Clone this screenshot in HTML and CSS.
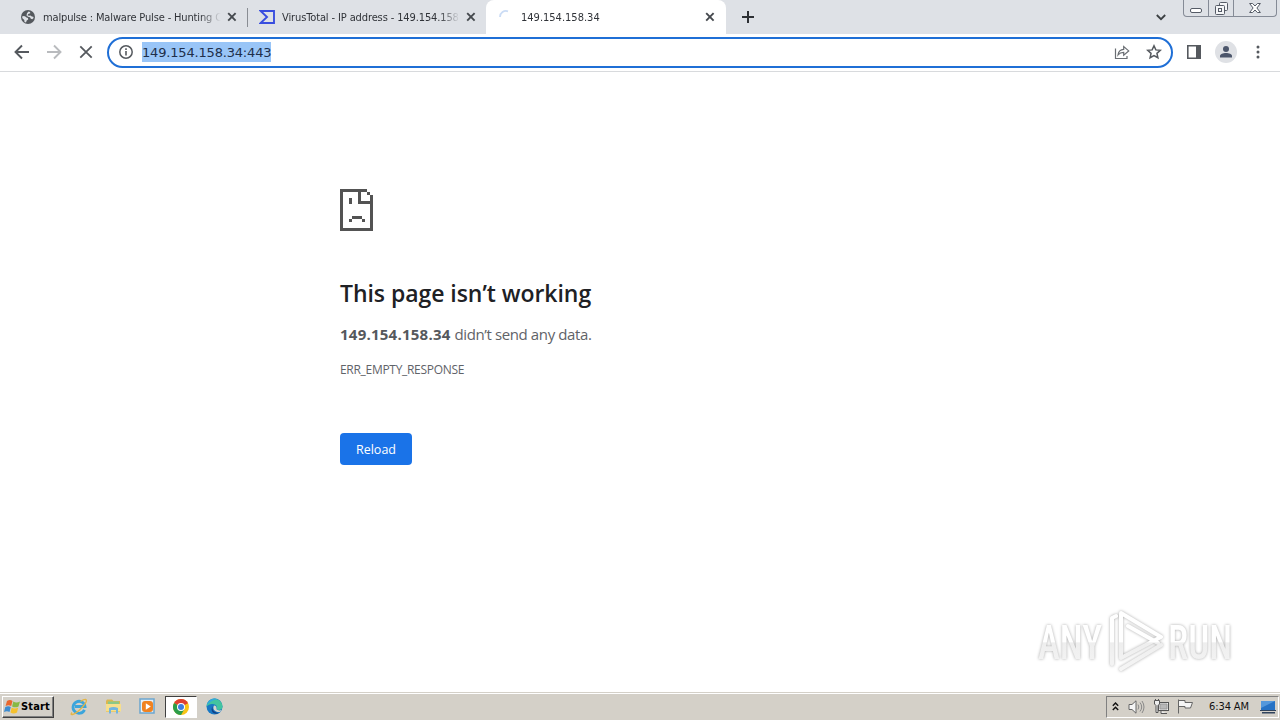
FILE: index.html
```html
<!DOCTYPE html>
<html lang="en">
<head>
	<meta charset="utf-8">
	<title>149.154.158.34</title>
	<link rel="stylesheet" href="styles.css">
</head>
<body>
<div class="screen">
	<!-- tab strip -->
	<div class="tabs">
		<div class="tab first">
			<svg class="favicon" width="14" height="14" viewBox="0 0 14 14"><circle cx="7" cy="7" r="7" fill="#54585d"/><path d="M1.500 6l2.500.3 1.500 1.200 1.500.5.2 1.500-1.500 1-.7 2-1.500-.6-.2-2L1.200 8zM7.500 1.500l1.500.5.3 1.200-2 .8-.8 1.300 1.500.5 1.500-.3 1.300 1 1.500.2.300 1.300-1.300 1.200-1.500-.5-.8-1.500-2-.4-1.500-1.300.5-2.200z" fill="#dee1e6"/></svg>
			<span class="title">malpulse : Malware Pulse - Hunting C</span>
			<svg class="close" width="10" height="10" viewBox="0 0 10 10"><path d="M1.2 1.2l7.4 7.4M8.6 1.2L1.2 8.6"/></svg>
		</div>
		<div class="tab second">
			<svg class="favicon" width="16" height="14" viewBox="0 0 16 14"><path d="M1.600 1h13.400v12H1.600L8 7z" fill="none" stroke="#394edf" stroke-width="1.900"/></svg>
			<span class="title">VirusTotal - IP address - 149.154.158</span>
			<svg class="close" width="10" height="10" viewBox="0 0 10 10"><path d="M1.2 1.2l7.4 7.4M8.6 1.2L1.2 8.6"/></svg>
		</div>
		<div class="tab active">
			<svg class="favicon" width="14" height="14" viewBox="0 0 14 14"><path d="M1 7a6 6 0 0 1 8-5.700" fill="none" stroke="#cbdcf5" stroke-width="1.800"/></svg>
			<span class="title">149.154.158.34</span>
			<svg class="close" width="10" height="10" viewBox="0 0 10 10"><path d="M1.2 1.2l7.4 7.4M8.6 1.2L1.2 8.6"/></svg>
		</div>
		<svg class="plus" width="12" height="12" viewBox="0 0 12 12"><path d="M6 0v12M0 6h12" stroke="#2d3034" stroke-width="2"/></svg>
		<svg class="chevron" width="10" height="7" viewBox="0 0 10 7"><path d="M.8 1L5 5.200 9.200 1" fill="none" stroke="#3c4043" stroke-width="1.800"/></svg>
		<div class="winbuttons">
			<span class="winbtn"><svg width="12" height="5" viewBox="0 0 12 5"><rect x=".5" y=".5" width="11" height="4" rx="1.500" fill="#fff" stroke="#555b66"/></svg></span>
			<span class="winbtn"><svg width="13" height="13" viewBox="0 0 13 13" fill="#f4f5f7" stroke="#555b66"><rect x="4.500" y=".5" width="8" height="8" rx="1"/><rect x=".5" y="3.500" width="9" height="9" rx="1"/><rect x="3.500" y="6.500" width="3" height="3"/></svg></span>
			<span class="winbtn wide"><svg width="12" height="10" viewBox="0 0 12 10"><path d="M.6.5h3L6 3 8.400.5h3L7.900 5l3.500 4.500h-3L6 7 3.600 9.500h-3L4.100 5z" fill="#fff" stroke="#555b66"/></svg></span>
		</div>
	</div>

	<!-- toolbar -->
	<div class="toolbar">
		<div class="nav">
			<svg width="16" height="16" viewBox="0 0 16 16"><path d="M15 8H2M8 1.500L1.500 8 8 14.500" fill="none" stroke="#55595e" stroke-width="1.900"/></svg>
			<svg width="16" height="16" viewBox="0 0 16 16"><path d="M1 8h13M8 1.500L14.500 8 8 14.500" fill="none" stroke="#b9bbbe" stroke-width="1.900"/></svg>
			<svg width="16" height="16" viewBox="0 0 16 16"><path d="M2.300 2.300l11.400 11.400M13.700 2.300L2.300 13.700" fill="none" stroke="#55595e" stroke-width="1.800"/></svg>
		</div>
		<div class="omnibox">
			<svg class="info" width="14" height="14" viewBox="0 0 14 14"><circle cx="7" cy="7" r="6.200" fill="none" stroke="#55595e" stroke-width="1.500"/><path d="M7 6v4.500M7 3.300v1.600" stroke="#55595e" stroke-width="1.600"/></svg>
			<span class="url">149.154.158.34:443</span>
			<svg class="share" width="16" height="16" viewBox="0 0 16 16" fill="none" stroke="#6a6e73" stroke-width="1.200"><path d="M1.500 4.500v10h11.500V12"/><path d="M4 11c.5-4 2.600-5.600 5.700-5.700V2.600l5 4.300-5 4.200V8.400C7.300 8.400 5.500 9.100 4 11z"/></svg>
			<svg class="star" width="16" height="16" viewBox="0 0 16 16"><path d="M8 1.800l1.850 4.100 4.450.45-3.350 3 .95 4.400L8 11.500l-3.900 2.250.95-4.400-3.350-3 4.450-.45z" fill="none" stroke="#55595e" stroke-width="1.500"/></svg>
		</div>
		<svg class="panel" width="14" height="14" viewBox="0 0 14 14"><path d="M.8.8h12.400v12.400H.8z" fill="#fff" stroke="#55595e" stroke-width="1.600"/><path d="M9 1h4v12H9z" fill="#55595e"/></svg>
		<svg class="avatar" width="22" height="22" viewBox="0 0 22 22"><circle cx="11" cy="11" r="11" fill="#dfe1e5"/><circle cx="11" cy="8" r="3" fill="#4c566b"/><path d="M5 16.500V15c0-4 12-4 12 0v1.500z" fill="#4c566b"/></svg>
		<svg class="dots" width="4" height="14" viewBox="0 0 4 14" fill="#55595e"><circle cx="2" cy="2" r="1.500"/><circle cx="2" cy="7" r="1.500"/><circle cx="2" cy="12" r="1.500"/></svg>
	</div>

	<!-- error page -->
	<div class="page">
		<div class="error">
			<svg class="sadface" width="33" height="42" viewBox="0 0 33 42" fill="#535353" shape-rendering="crispEdges"><path d="M0 0h27v3h-6v9h12v30H0zM3 3v36h27V15H18V3z" fill-rule="evenodd"/><path d="M27 3h3v3h-3zM30 6h3v9h-3zM9 9h3v6H9zM12 27h10v3H12zM9 30h3v3H9zM22 30h3v3h-3z"/></svg>
			<h1>This page isn’t working</h1>
			<p class="message"><b>149.154.158.34</b> <span>didn’t send any data.</span></p>
			<p class="code">ERR_EMPTY_RESPONSE</p>
			<button class="reload">Reload</button>
		</div>
		<svg class="watermark" width="210" height="76" viewBox="0 0 210 76">
			<defs>
				<linearGradient id="fade" gradientUnits="userSpaceOnUse" x1="0" y1="0" x2="0" y2="76">
					<stop offset=".52" stop-color="#fff"/>
					<stop offset=".54" stop-color="#eee"/>
					<stop offset=".9" stop-color="#f5f5f5"/>
				</linearGradient>
			</defs>
			<g class="marktext" fill="url(#fade)">
				<text x="8" y="57" textLength="64" lengthAdjust="spacingAndGlyphs">ANY</text>
				<text x="138" y="57" textLength="64" lengthAdjust="spacingAndGlyphs">RUN</text>
			</g>
			<g class="marklogo" fill="none" stroke="url(#fade)" stroke-width="4" stroke-linejoin="round" stroke-linecap="round">
				<path d="M82 62V16l4-2M91 55V11l40 24M98 24l30 17M91 55V23M91 56l38-20M91 67l40-24"/>
			</g>
		</svg>
	</div>

	<!-- windows taskbar -->
	<div class="taskbar">
		<div class="start">
			<svg width="17" height="16" viewBox="0 0 17 16"><path d="M3 2q3-2 5.500 0L7.200 7Q4.500 5.500 1.600 7z" fill="#e9672d"/><path d="M9.300 2.500q3 1.800 6.700 0L14.500 7.500q-3.500 1.700-6.400 0z" fill="#87b944"/><path d="M1.300 8q3-1.700 5.500 0L5.500 13Q3 11.400 0 13z" fill="#3d8cd0"/><path d="M7.700 8.400q3 2 6.500 0L13 13.500q-3.500 2-6.500 0z" fill="#f5c12e"/></svg>
			<span>Start</span>
		</div>
		<div class="launch">
			<span class="app"><svg width="18" height="18" viewBox="0 0 18 18"><path d="M14.500 11.800A6 6 0 1 1 15 8.500H5" fill="none" stroke="#3ba5dc" stroke-width="2.800"/><path d="M2 14.500C-1 18 4 17 9 12.500 15 7 18 2 15.500 1.500c-1.500-.3-3.500 1-5 2" fill="none" stroke="#e4b544" stroke-width="1.300"/></svg></span>
			<span class="app"><svg width="17" height="17" viewBox="0 0 17 17"><path d="M1 3l1-1.500h5L8.500 3H15v11H1z" fill="#dcb74f"/><path d="M3 3.500h11v5H3z" fill="#8cc887"/><path d="M1 6h15v7.500H1z" fill="#f7df8c"/><path d="M4 15.500V10q4.500-2 9 0v5.500h-2V12H6v3.500z" fill="#72b5df"/></svg></span>
			<span class="app"><svg width="17" height="17" viewBox="0 0 17 17"><rect x="1" y="1" width="14" height="14" fill="#e7f1f8" stroke="#6ba5ce" stroke-width="1.500"/><rect x="3" y="3" width="11" height="11" rx="3" fill="#f08220"/><path d="M6.800 5.300l5 3.200-5 3.200z" fill="#fff"/></svg></span>
			<span class="app pressed"><svg width="16" height="16" viewBox="0 0 16 16"><circle cx="8" cy="8" r="8" fill="#f9c416"/><path d="M8 8L1.070 4A8 8 0 0 1 14.930 4z" fill="#df4032"/><path d="M8 8L1.070 4A8 8 0 0 0 8 16l3.500-6z" fill="#2c9d4a"/><path d="M8 4h6.930L8 8z" fill="#df4032"/><circle cx="8" cy="8" r="4" fill="#fff"/><circle cx="8" cy="8" r="3" fill="#3e7de0"/></svg></span>
			<span class="app"><svg width="17" height="17" viewBox="0 0 17 17"><circle cx="8.500" cy="8.500" r="8" fill="#1878c4"/><path d="M.7 7A8 8 0 0 1 16.500 9c0 3-4 3.700-6 2.300 1-2 .2-4.400-2.500-5C5 5.500 2.500 6.500.7 8.500z" fill="#42c4a0"/><path d="M.7 7A8 8 0 0 1 12 1.400C8 1.500 5 3 .7 7z" fill="#32aadb"/><path d="M7 8c-2 4 2 7.300 6 7-6 2.500-9.500-2.700-6-7z" fill="#123f84"/><path d="M8 7.500q3 0 2.500 3.800c1 1.200 3.500 1.400 5 .7l-1.500 2C9 14.500 6 11 8 7.500z" fill="#d5d5cc"/></svg></span>
		</div>
		<div class="tray">
			<svg class="more" width="7" height="9" viewBox="0 0 7 9"><path d="M.8 3.800L3.500 1l2.700 2.800M.8 8l2.700-2.800L6.200 8" fill="none" stroke="#111" stroke-width="1.400"/></svg>
			<svg class="sound" width="17" height="14" viewBox="0 0 17 14" fill="none" stroke="#666"><path d="M1 4.500h3L8 .8v12.400L4 9.500H1z" fill="#f5f5f5"/><path d="M10 4.500q1.700 2.500 0 5M12 2.500q3.400 4.500 0 9M14 1q4 6 0 12" stroke="#888"/></svg>
			<svg class="network" width="16" height="16" viewBox="0 0 16 16" fill="#eee" stroke="#555"><rect x="5.500" y="3.500" width="10" height="8"/><path d="M7 5h7v5H7z" fill="#b8b8b8" stroke="#999"/><path d="M1.500 1.500h5V5L5 6.500v7H3v-7L1.500 5zM2.500 0v2M5.500 0v2M8 12v2.500h6"/></svg>
			<svg class="flag" width="17" height="15" viewBox="0 0 17 15"><path d="M1.500.5v14M2 1.500h6v2h7.500L13.500 9H8V7.500H2" fill="#f5f5f5" stroke="#666"/></svg>
			<span class="clock">6:34 AM</span>
			<svg class="desktop" width="16" height="14" viewBox="0 0 16 14"><path d="M1 1h14v9H1z" fill="#2672c5"/><path d="M1 1h14L1 8z" fill="#5498dc"/><path d="M0 10h16v1H0zM2 12h13v1.500H2z" fill="#30435c"/></svg>
		</div>
	</div>
</div>
</body>
</html>
```
FILE: styles.css
```css
*{
	box-sizing: border-box;
}
body{
	margin: 0;
	background: #fff;
}
svg{
	display: block;
	flex: none;
}
.screen{
	display: flex;
	flex-direction: column;
	width: 1280px;
	height: 720px;
	overflow: hidden;
	font-family: "DejaVu Sans Condensed", "DejaVu Sans", sans-serif;
	font-stretch: condensed;
}

/* tab strip */
.tabs{
	display: flex;
	align-items: center;
	height: 34px;
	background: #dee1e6;
}
.tab{
	display: flex;
	align-items: center;
	height: 34px;
	font-size: 11px;
	color: #303338;
}
.first{
	width: 248px;
	padding-left: 21px;
	background: linear-gradient(#898d93, #898d93) no-repeat right 8px / 1px 19px;
}
.second{
	width: 238px;
	padding-left: 11px;
	border-bottom-right-radius: 8px;
}
.active{
	width: 240px;
	padding-left: 13px;
	background: #fff;
	border-radius: 8px 8px 0 0;
}
.title{
	width: 178px;
	margin-left: 8px;
	white-space: nowrap;
	-webkit-mask-image: linear-gradient(90deg, #000 157px, transparent 178px);
}
.first .title{
	letter-spacing: -.15px;
}
.second .title{
	margin-left: 7px;
	letter-spacing: -.12px;
}
.close{
	margin-left: 6px;
	fill: none;
	stroke: #45494e;
	stroke-width: 1.9;
}
.plus{
	margin-left: 16px;
}
.chevron{
	margin-left: 402px;
}
.winbuttons{
	display: flex;
	align-self: flex-start;
	height: 17px;
	margin-left: 17px;
	border: 1px solid #858b96;
	border-top: 0;
	border-radius: 0 0 4px 4px;
}
.winbtn{
	display: flex;
	align-items: center;
	justify-content: center;
	width: 25px;
	border-right: 1px solid #858b96;
}
.winbtn:first-child{
	padding-top: 5px;
}
.wide{
	width: 42px;
	border-right: 0;
}

/* toolbar */
.toolbar{
	display: flex;
	align-items: center;
	height: 38px;
	padding-bottom: 1px;
	border-bottom: 1px solid #d8dadd;
}
.nav{
	display: flex;
	gap: 16px;
	margin-left: 14px;
}
.omnibox{
	display: flex;
	align-items: center;
	width: 1066px;
	height: 31px;
	margin-left: 13px;
	padding-left: 10px;
	border: 2px solid #1f6fd6;
	border-radius: 16px;
}
.url{
	height: 20px;
	margin-left: 9px;
	font-family: "DejaVu Sans", sans-serif;
	font-stretch: normal;
	font-size: 13px;
	line-height: 22px;
	letter-spacing: -.18px;
	color: #202f4a;
	background: #99c5f7;
}
.share{
	margin-left: auto;
}
.star{
	margin: 0 9px 0 16px;
}
.panel{
	margin-left: 14px;
}
.avatar{
	margin-left: 14px;
}
.dots{
	margin-left: 19px;
}

/* error page */
.page{
	position: relative;
	flex: 1;
}
.error{
	width: 600px;
	margin-left: 340px;
	padding-top: 117px;
	font-family: "Open Sans", "Noto Sans", sans-serif;
	font-stretch: normal;
	color: #5f6368;
}
h1{
	margin: 45px 0 0;
	font-size: 23px;
	font-weight: 600;
	line-height: 34px;
	letter-spacing: -.05px;
	color: #202124;
}
.message{
	margin: 13px 0 0;
	font-size: 15px;
	line-height: 22px;
	white-space: nowrap;
}
.message b{
	letter-spacing: .24px;
	color: #55585c;
}
.message span{
	letter-spacing: -.38px;
}
.code{
	margin: 16px 0 0;
	font-size: 12px;
	line-height: 18px;
	letter-spacing: -.3px;
}
.reload{
	display: block;
	width: 72px;
	height: 32px;
	margin-top: 54px;
	padding: 0;
	border: 0;
	border-radius: 4px;
	background: #1a73e8;
	font-family: "Open Sans", sans-serif;
	font-size: 12.5px;
	color: #fff;
}
.watermark{
	position: absolute;
	right: 40px;
	bottom: 14px;
}
.marktext{
	font-family: Roboto, "Liberation Sans", sans-serif;
	font-size: 49px;
	font-weight: 500;
	filter: drop-shadow(0 0 1.5px #aaa);
}
.marklogo{
	filter: drop-shadow(0 0 1.5px #aaa);
}

/* taskbar */
.taskbar{
	display: flex;
	align-items: center;
	height: 28px;
	padding: 0 1px 0 2px;
	background: #d4d0c8;
	border-top: 1px solid #d4d0c8;
	box-shadow: inset 0 1px #fff;
}
.start{
	display: flex;
	align-items: center;
	gap: 0;
	width: 52px;
	height: 22px;
	padding-left: 1px;
	border: 1px solid;
	border-color: #fff #404040 #404040 #fff;
	box-shadow: inset -1px -1px #808080;
	font-size: 11px;
	font-weight: bold;
	letter-spacing: .15px;
	color: #000;
}
.launch{
	display: flex;
	margin-left: 9px;
}
.app{
	display: flex;
	align-items: center;
	justify-content: center;
	width: 32px;
	height: 22px;
	margin-right: 2px;
}
.app:last-child{
	width: 30px;
}
.pressed{
	background: #fff;
	border: 1px solid;
	border-color: #404040 #fff #fff #404040;
}
.tray{
	display: flex;
	align-items: center;
	width: 173px;
	height: 22px;
	margin-left: auto;
	padding-left: 5px;
	border: 1px solid;
	border-color: #808080 #fff #fff #808080;
	font-size: 11px;
	color: #111;
}
.sound{
	margin-left: 9px;
}
.network{
	margin-left: 8px;
}
.flag{
	margin-left: 8px;
}
.clock{
	margin-left: 15px;
	white-space: nowrap;
	letter-spacing: -.1px;
}
.desktop{
	margin-left: auto;
	margin-right: 2px;
}
```
